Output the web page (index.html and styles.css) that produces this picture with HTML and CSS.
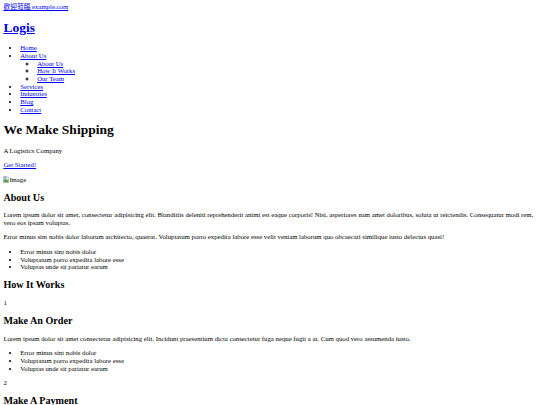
FILE: index.html
```html
<!DOCTYPE html>
<html lang="en">
<head>
    <meta charset="UTF-8">
    <meta name="viewport" content="width=device-width, initial-scale=1.0">
    <title>Logis</title>
    <link rel="stylesheet" href="styles.css">
</head>
<body>
    <header>
        <div class="topbar">
            <a href="#">歡迎蒞臨 example.com</a>
        </div>
        <h1><a href="#">Logis</a></h1>
        <nav>
            <ul>
                <li><a href="#">Home</a></li>
                <li><a href="#">About Us</a>
                    <ul>
                        <li><a href="#">About Us</a></li>
                        <li><a href="#">How It Works</a></li>
                        <li><a href="#">Our Team</a></li>
                    </ul>
                </li>
                <li><a href="#">Services</a></li>
                <li><a href="#">Industries</a></li>
                <li><a href="#">Blog</a></li>
                <li><a href="#">Contact</a></li>
            </ul>
        </nav>
    </header>

    <section class="hero">
        <h1>We Make Shipping</h1>
        <p>A Logistics Company</p>
        <p><a href="#">Get Started!</a></p>
        <span class="broken-img"><svg width="6" height="7" viewBox="0 0 16 18"><path d="M1 1h10l4 4v12H1z" fill="#f4f4f4" stroke="#9a9a9a" stroke-width="1.5"/><path d="M2 10l4-3 4 3 4-2v8H2z" fill="#5aa05a"/><path d="M2 2h8v5L6 6 2 9z" fill="#8ab4e0"/></svg>Image</span>
    </section>

    <section class="about">
        <h2>About Us</h2>
        <p>Lorem ipsum dolor sit amet, consectetur adipisicing elit. Blanditiis deleniti reprehenderit animi est eaque corporis! Nisi, asperiores nam amet doloribus, soluta ut reiciendis. Consequatur modi rem, vero eos ipsam voluptas.</p>
        <p>Error minus sint nobis dolor laborum architecto, quaerat. Voluptatum porro expedita labore esse velit veniam laborum quo obcaecati similique iusto delectus quasi!</p>
        <ul>
            <li>Error minus sint nobis dolor</li>
            <li>Voluptatum porro expedita labore esse</li>
            <li>Voluptas unde sit pariatur earum</li>
        </ul>
    </section>

    <section class="how-it-works">
        <h2>How It Works</h2>
        <div class="step">
            <p>1</p>
            <h2>Make An Order</h2>
            <p>Lorem ipsum dolor sit amet consectetur adipisicing elit. Incidunt praesentium dicta consectetur fuga neque fugit a at. Cum quod vero assumenda iusto.</p>
            <ul>
                <li>Error minus sint nobis dolor</li>
                <li>Voluptatum porro expedita labore esse</li>
                <li>Voluptas unde sit pariatur earum</li>
            </ul>
        </div>
        <div class="step">
            <p>2</p>
            <h2>Make A Payment</h2>
            <p>Lorem ipsum dolor sit amet consectetur adipisicing elit. Incidunt praesentium dicta consectetur fuga neque fugit a at. Cum quod vero assumenda iusto.</p>
            <ul>
                <li>Error minus sint nobis dolor</li>
                <li>Voluptatum porro expedita labore esse</li>
                <li>Voluptas unde sit pariatur earum</li>
            </ul>
        </div>
    </section>
</body>
</html>
```

FILE: styles.css
```css
/* browser defaults, scaled down (1280px page shown at 540px) */
html {
    font-size: 6.75px;
    line-height: 1.135;
}

body {
    font-family: 'Liberation Serif', 'Noto Sans CJK TC', serif;
    margin: 3.375px;
}

h1 {
    font-size: 2em;
    margin: 0.67em 0;
}

h2 {
    font-size: 1.5em;
    margin: 0.83em 0;
}

p {
    margin: 1em 0;
}

ul {
    margin: 1em 0;
    padding-left: 16.875px;
}

ul ul {
    margin: 0;
    list-style-type: circle;
}

.broken-img svg {
    vertical-align: -1px;
}
```
